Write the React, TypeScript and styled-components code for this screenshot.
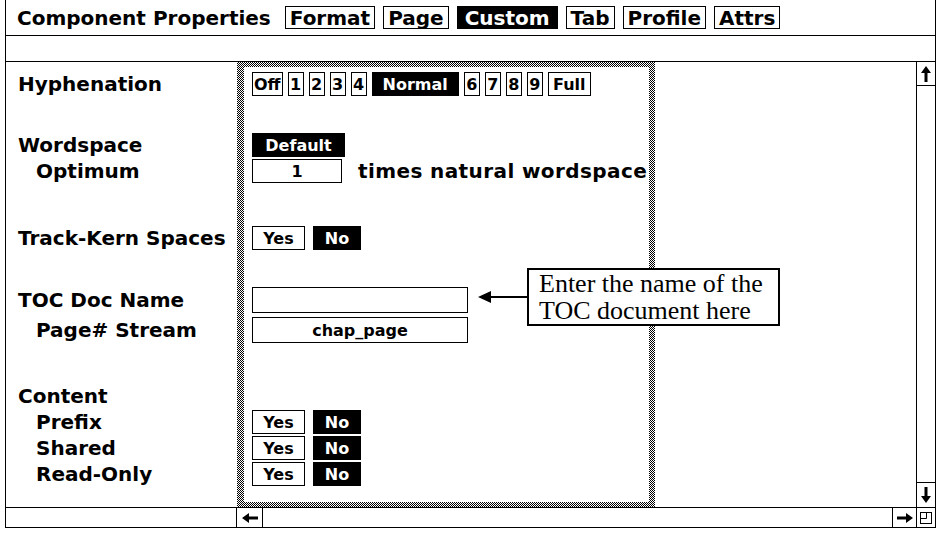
import React from 'react';
import styled, { createGlobalStyle } from 'styled-components';

const GlobalStyle = createGlobalStyle`
  html, body {
    margin: 0;
    padding: 0;
    background: #fff;
  }
  body {
    font-family: "DejaVu Sans", "Liberation Sans", sans-serif;
    color: #000;
  }
`;

const dither = `repeating-conic-gradient(#000 0 25%, #fff 0 50%) 0 0 / 2px 2px`;

const Window = styled.div`
  margin-left: 5px;
  width: 931px;
  height: 528px;
  box-sizing: border-box;
  border-left: 1px solid #000;
  border-right: 1px solid #000;
  border-bottom: 1px solid #000;
  display: flex;
  flex-direction: column;
`;

const TitleBar = styled.div`
  height: 35px;
  border-bottom: 1px solid #000;
  display: flex;
  align-items: center;
  padding-left: 11px;
  gap: 8px;
`;

const Title = styled.h1`
  margin: 0 6px 0 0;
  font-size: 20px;
  font-weight: bold;
  white-space: nowrap;
`;

const Tab = styled.span<{ $active?: boolean }>`
  height: 23px;
  box-sizing: border-box;
  display: inline-flex;
  align-items: center;
  border: 1px solid #000;
  padding: 0 ${p => (p.$active ? 7 : 4)}px;
  font-size: 20px;
  font-weight: bold;
  background: ${p => (p.$active ? '#000' : '#fff')};
  color: ${p => (p.$active ? '#fff' : '#000')};
`;

const SubBar = styled.div`
  height: 25px;
  border-bottom: 1px solid #000;
`;

const Body = styled.div`
  flex: 1;
  display: flex;
  min-height: 0;
`;

const Pane = styled.div`
  flex: 1;
  display: flex;
  position: relative;
`;

const LabelCol = styled.div`
  width: 231px;
  padding: 5px 0 0 12px;
  box-sizing: border-box;
`;

const Frame = styled.div`
  width: 418px;
  padding: 5px 6px 5px 7px;
  box-sizing: border-box;
  background: ${dither};
  display: flex;
`;

const FrameInner = styled.div`
  flex: 1;
  background: #fff;
  padding-left: 8px;
`;

const Section = styled.div<{ $gap: number }>`
  margin-top: ${p => p.$gap}px;
  display: flex;
  flex-direction: column;
`;

const Row = styled.div<{ $mt?: number }>`
  height: 26px;
  margin-top: ${p => p.$mt ?? 0}px;
  display: flex;
  align-items: center;
  gap: 5px;
`;

const Label = styled.span<{ $indent?: boolean }>`
  font-size: 20px;
  font-weight: bold;
  white-space: nowrap;
  padding-left: ${p => (p.$indent ? 18 : 0)}px;
`;

const Btn = styled.span<{ $on?: boolean; $w?: number }>`
  height: 24px;
  min-width: ${p => p.$w ?? 16}px;
  box-sizing: border-box;
  display: inline-flex;
  align-items: center;
  justify-content: center;
  border: 1px solid #000;
  padding: 0 ${p => (p.$on ? 10 : 1)}px;
  font-size: 16px;
  font-weight: bold;
  background: ${p => (p.$on ? '#000' : '#fff')};
  color: ${p => (p.$on ? '#fff' : '#000')};
`;

const Field = styled.span<{ $w: number; $h?: number }>`
  width: ${p => p.$w}px;
  height: ${p => p.$h ?? 26}px;
  box-sizing: border-box;
  display: inline-flex;
  align-items: center;
  justify-content: center;
  border: 1px solid #000;
  font-size: 16px;
  font-weight: bold;
`;

const Note = styled.span`
  margin-left: 11px;
  font-size: 20px;
  font-weight: bold;
  letter-spacing: 0.4px;
  white-space: nowrap;
`;

const Callout = styled.div`
  position: absolute;
  left: 472px;
  top: 206px;
  display: flex;
  align-items: center;
`;

const CalloutBox = styled.div`
  width: 253px;
  box-sizing: border-box;
  border: 2px solid #000;
  background: #fff;
  padding: 0 10px;
  font-family: "Liberation Serif", "DejaVu Serif", serif;
  font-size: 26px;
  line-height: 27px;
  white-space: nowrap;
`;

const VScroll = styled.div`
  width: 19px;
  border-left: 1px solid #000;
  box-sizing: border-box;
  display: flex;
  flex-direction: column;
`;

const ScrollCell = styled.div<{ $h?: number; $edge?: 'top' | 'bottom' }>`
  height: ${p => p.$h ?? 23}px;
  display: flex;
  align-items: center;
  justify-content: center;
  ${p => (p.$edge === 'top' ? 'border-top: 1px solid #000;' : '')}
  ${p => (p.$edge === 'bottom' ? 'border-bottom: 1px solid #000;' : '')}
`;

const Filler = styled.div`
  flex: 1;
`;

const HScroll = styled.div`
  height: 20px;
  border-top: 1px solid #000;
  box-sizing: border-box;
  display: flex;
`;

const HCell = styled.div<{ $w: number; $left?: boolean; $right?: boolean }>`
  width: ${p => p.$w}px;
  box-sizing: border-box;
  display: flex;
  align-items: center;
  justify-content: center;
  ${p => (p.$left ? 'border-left: 1px solid #000;' : '')}
  ${p => (p.$right ? 'border-right: 1px solid #000;' : '')}
`;

const ArrowUp = () => (
  <svg width="10" height="16" viewBox="0 0 10 16">
    <path d="M5 0 L10 7 L6.5 7 L6.5 16 L3.5 16 L3.5 7 L0 7 Z" fill="#000" />
  </svg>
);

const ArrowDown = () => (
  <svg width="10" height="16" viewBox="0 0 10 16">
    <path d="M5 16 L10 9 L6.5 9 L6.5 0 L3.5 0 L3.5 9 L0 9 Z" fill="#000" />
  </svg>
);

const ArrowLeft = () => (
  <svg width="16" height="10" viewBox="0 0 16 10">
    <path d="M0 5 L7 0 L7 3.5 L16 3.5 L16 6.5 L7 6.5 L7 10 Z" fill="#000" />
  </svg>
);

const ArrowRight = () => (
  <svg width="16" height="10" viewBox="0 0 16 10">
    <path d="M16 5 L9 0 L9 3.5 L0 3.5 L0 6.5 L9 6.5 L9 10 Z" fill="#000" />
  </svg>
);

const CornerIcon = () => (
  <svg width="12" height="12" viewBox="0 0 12 12">
    <rect x="0.5" y="0.5" width="11" height="11" fill="none" stroke="#000" />
    <path d="M6.5 0.5 V6.5 H0.5" fill="none" stroke="#000" />
  </svg>
);

const CalloutArrow = () => (
  <svg width="49" height="14" viewBox="0 0 49 14">
    <path d="M0 7 L13 1 L13 13 Z" fill="#000" />
    <rect x="12" y="6" width="37" height="2" fill="#000" />
  </svg>
);

const YesNo = () => (
  <>
    <Btn $w={53}>Yes</Btn>
    <Btn $on $w={48} style={{ marginLeft: 3 }}>No</Btn>
  </>
);

interface IRow {
  label: string;
  indent?: boolean;
  mt?: number;
  value?: React.ReactNode;
}

interface ISection {
  gap: number;
  rows: IRow[];
}

const hyphen = ['1', '2', '3', '4'];
const hyphen2 = ['6', '7', '8', '9'];

const sections: ISection[] = [
  {
    gap: 4,
    rows: [
      {
        label: 'Hyphenation',
        value: (
          <>
            <Btn $w={30}>Off</Btn>
            {hyphen.map(n => <Btn key={n}>{n}</Btn>)}
            <Btn $on>Normal</Btn>
            {hyphen2.map(n => <Btn key={n}>{n}</Btn>)}
            <Btn $w={43}>Full</Btn>
          </>
        ),
      },
    ],
  },
  {
    gap: 35,
    rows: [
      { label: 'Wordspace', value: <Btn $on $w={93}>Default</Btn> },
      {
        label: 'Optimum',
        indent: true,
        value: (
          <>
            <Field $w={90} $h={24}>1</Field>
            <Note>times natural wordspace</Note>
          </>
        ),
      },
    ],
  },
  {
    gap: 41,
    rows: [{ label: 'Track-Kern Spaces', value: <YesNo /> }],
  },
  {
    gap: 36,
    rows: [
      { label: 'TOC Doc Name', value: <Field $w={216} /> },
      { label: 'Page# Stream', indent: true, mt: 4, value: <Field $w={216}>chap_page</Field> },
    ],
  },
  {
    gap: 40,
    rows: [
      { label: 'Content' },
      { label: 'Prefix', indent: true, value: <YesNo /> },
      { label: 'Shared', indent: true, value: <YesNo /> },
      { label: 'Read-Only', indent: true, value: <YesNo /> },
    ],
  },
];

const tabs = ['Format', 'Page', 'Custom', 'Tab', 'Profile', 'Attrs'];

export default function App() {
  return (
    <>
      <GlobalStyle />
      <Window>
        <TitleBar>
          <Title>Component Properties</Title>
          {tabs.map(t => (
            <Tab key={t} $active={t === 'Custom'}>{t}</Tab>
          ))}
        </TitleBar>
        <SubBar />
        <Body>
          <Pane>
            <LabelCol>
              {sections.map((s, i) => (
                <Section key={i} $gap={s.gap}>
                  {s.rows.map(r => (
                    <Row key={r.label} $mt={r.mt}>
                      <Label $indent={r.indent}>{r.label}</Label>
                    </Row>
                  ))}
                </Section>
              ))}
            </LabelCol>
            <Frame>
              <FrameInner>
                {sections.map((s, i) => (
                  <Section key={i} $gap={s.gap}>
                    {s.rows.map(r => (
                      <Row key={r.label} $mt={r.mt}>{r.value}</Row>
                    ))}
                  </Section>
                ))}
              </FrameInner>
            </Frame>
            <Callout>
              <CalloutArrow />
              <CalloutBox>
                Enter the name of the
                <br />
                TOC document here
              </CalloutBox>
            </Callout>
          </Pane>
          <VScroll>
            <ScrollCell $edge="bottom"><ArrowUp /></ScrollCell>
            <Filler />
            <ScrollCell $edge="top" $h={24}><ArrowDown /></ScrollCell>
          </VScroll>
        </Body>
        <HScroll>
          <HCell $w={231} $right />
          <HCell $w={26} $right><ArrowLeft /></HCell>
          <Filler />
          <HCell $w={24} $left><ArrowRight /></HCell>
          <HCell $w={19} $left><CornerIcon /></HCell>
        </HScroll>
      </Window>
    </>
  );
}
